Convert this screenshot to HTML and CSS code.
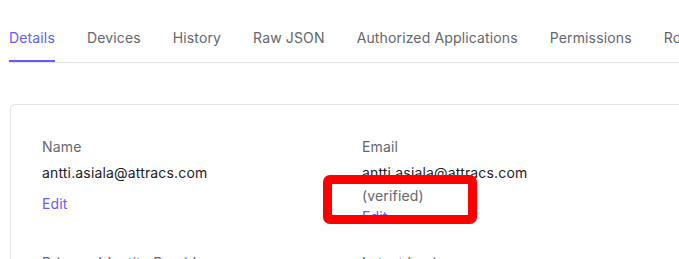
FILE: index.html
```html
<!DOCTYPE html>
<html lang="en">
<head>
  <meta charset="UTF-8" />
  <meta name="viewport" content="width=device-width, initial-scale=1.0"/>
  <title>User Details</title>
  <link rel="stylesheet" href="styles.css">
</head>
<body>
  <div class="page">
    <nav class="tabs">
      <a href="#" class="tab active">Details</a>
      <a href="#" class="tab">Devices</a>
      <a href="#" class="tab">History</a>
      <a href="#" class="tab">Raw JSON</a>
      <a href="#" class="tab">Authorized Applications</a>
      <a href="#" class="tab">Permissions</a>
      <a href="#" class="tab">Roles</a>
    </nav>

    <section class="card">
      <div class="field">
        <div class="label">Name</div>
        <div class="value">antti.asiala@attracs.com</div>
        <a href="#" class="edit">Edit</a>
      </div>
      <div class="field">
        <div class="label">Email</div>
        <div class="value">antti.asiala@attracs.com</div>
        <div class="verified">(verified)</div>
        <a href="#" class="edit tight">Edit</a>
        <!-- annotation box drawn over the screenshot -->
        <span class="highlight"></span>
      </div>
      <div class="field">
        <div class="label">Primary Identity Provider</div>
        <div class="value">Database</div>
      </div>
      <div class="field">
        <div class="label">Latest Login</div>
        <div class="value">Never</div>
      </div>
    </section>
  </div>
</body>
</html>
```

FILE: styles.css
```css
* {
  box-sizing: border-box;
  font-family: 'Inter', 'Noto Sans', sans-serif;
}

body {
  margin: 0;
  padding: 0;
  background: #ffffff;
  color: #1e212a;
  overflow: hidden;
}

.page {
  padding-left: 9px;
  width: 760px;
}

.tabs {
  display: flex;
  gap: 32px;
  padding-top: 28px;
  border-bottom: 1px solid #e3e4e8;
  white-space: nowrap;
}

.tab {
  font-size: 14px;
  line-height: 20px;
  letter-spacing: 0.14px;
  color: #65676e;
  text-decoration: none;
  padding-bottom: 12px;
  border-bottom: 2px solid transparent;
}

.tab.active {
  color: #635dff;
  border-bottom-color: #635dff;
}

.card {
  margin: 41px 0 0 1px;
  border: 1px solid #e3e4e8;
  border-radius: 5px;
  padding: 32px 31px;
  display: grid;
  grid-template-columns: 320px 320px;
  row-gap: 26px;
}

.field {
  position: relative;
  font-size: 14px;
  line-height: 20px;
  letter-spacing: 0.16px;
}

.label {
  color: #65676e;
}

.value {
  margin-top: 6px;
  color: #1e212a;
}

.verified {
  margin-top: 3px;
  color: #65676e;
}

.edit {
  display: block;
  margin-top: 11px;
  color: #635dff;
  text-decoration: none;
}

.edit.tight {
  margin-top: 1px;
}

.highlight {
  position: absolute;
  left: -39px;
  top: 38px;
  width: 154px;
  height: 49px;
  border: 9px solid #ff0000;
  border-radius: 7px;
}
```
